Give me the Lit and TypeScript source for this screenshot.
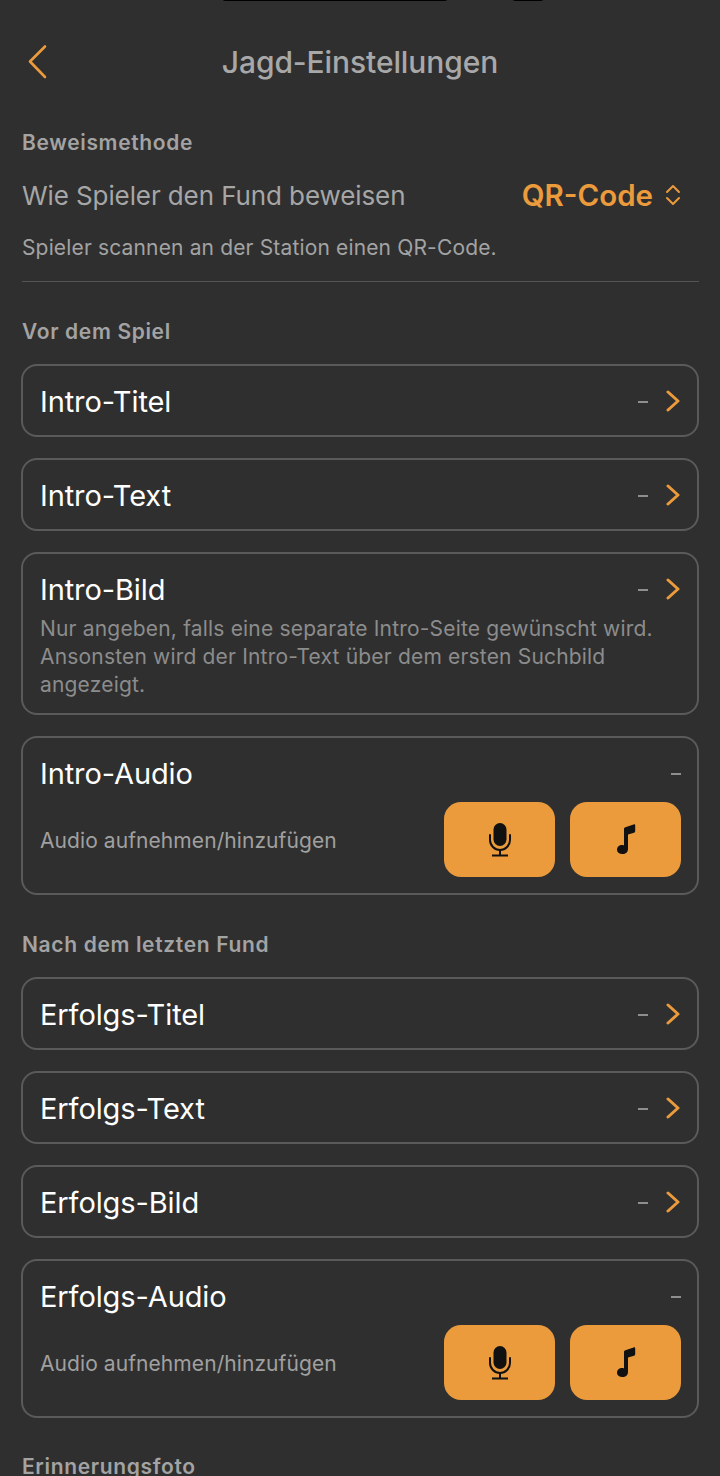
import { LitElement, html, css, nothing } from 'lit';
import { customElement } from 'lit/decorators.js';

const chevron = html`<svg class="chev" width="16" height="22" viewBox="0 0 16 22" fill="none"><path d="M3 2l10 9-10 9" stroke="currentColor" stroke-width="3" stroke-linecap="round" stroke-linejoin="round"/></svg>`;

const mic = html`<svg class="mic" width="24" height="34" viewBox="0 0 24 34" fill="none">
  <rect x="5.500" y="0" width="13" height="23" rx="6.500" fill="#111"/>
  <path d="M2 12v5a10 10 0 0 0 20 0v-5" stroke="#111" stroke-width="2" stroke-linecap="round"/>
  <path d="M12 27v5M4 32.500h16" stroke="#111" stroke-width="2"/>
</svg>`;

const note = html`<svg width="20" height="31" viewBox="0 0 20 31"><path fill="#111" d="M8 5c0-.9.5-1.500 1.400-1.800L17.600.4c.9-.3 1.600.2 1.600 1.100V7c0 .9-.4 1.400-1.200 1.700L12 10.500V25c0 3-2.300 5-5.500 5C3 30 1 28.200 1 25.700c0-2.700 2.300-4.700 5-4.700.8 0 1.500.1 2 .4z"/></svg>`;

@customElement('app-root')
export class AppRoot extends LitElement {
  static styles = css`
    :host {
      display: block;
      width: 720px;
      height: 1476px;
      overflow: hidden;
      background: #2f2f2f;
      position: relative;
      font-family: Inter, 'Noto Sans', sans-serif;
      color: #fff;
    }
    .notch {
      position: absolute;
      top: -6px;
      height: 7px;
      background: #000;
      border-radius: 4px;
    }
    .nav {
      display: flex;
      align-items: center;
      justify-content: center;
      position: relative;
      height: 36px;
      margin-top: 44px;
    }
    .back {
      position: absolute;
      left: 27px;
      top: 0;
      color: #eb9b3c;
    }
    .nav h1 {
      margin: 0;
      font-size: 30px;
      font-weight: 500;
      color: #a8a8a8;
      letter-spacing: -0.1px;
    }
    main {
      padding: 0 21px 0 22px;
    }
    .section {
      font-size: 21px;
      font-weight: 600;
      color: #a3a3a3;
      line-height: 24px;
      margin: 0;
      letter-spacing: 0.65px;
    }
    .first { margin-top: 51px; }
    .proof {
      display: flex;
      justify-content: space-between;
      align-items: center;
      margin-top: 24px;
      height: 32px;
      padding-right: 18px;
    }
    .proof .label { font-size: 26px; color: #a6a6a6; letter-spacing: -0.1px; }
    .picker {
      display: flex;
      align-items: center;
      gap: 12px;
      color: #eb9b3c;
      font-size: 29.500px;
      font-weight: 600;
    }
    .hint {
      font-size: 21px;
      line-height: 24px;
      color: #a3a3a3;
      margin-top: 25px;
      letter-spacing: 0.15px;
    }
    hr {
      border: 0;
      height: 1px;
      background: #545454;
      margin: 21px 0 0;
    }
    .vor { margin-top: 38px; }
    .list {
      display: flex;
      flex-direction: column;
      gap: 21px;
      margin-top: 20px;
      margin-left: -1px;
    }
    .card {
      border: 2px solid #5a5a5a;
      border-radius: 16px;
      padding: 17px 16px 16px 17px;
      box-sizing: border-box;
      min-height: 73px;
    }
    .row {
      display: flex;
      align-items: center;
      justify-content: space-between;
      height: 36px;
    }
    .title { font-size: 29px; font-weight: 400; color: #fff; letter-spacing: -0.1px; }
    .right { display: flex; align-items: center; gap: 17px; color: #8e8e8e; font-size: 22px; }
    .chev { color: #eb9b3c; display: block; }
    .dash { width: 10px; height: 2px; background: #8e8e8e; margin-top: 2px; }
    .sub {
      font-size: 21px;
      line-height: 28px;
      color: #8c8c8c;
      margin: 8px 0 -2px;
      letter-spacing: 0.18px;
    }
    .audio-row {
      display: flex;
      align-items: center;
      justify-content: space-between;
      margin-top: 11px;
    }
    .audio-row span { font-size: 21px; color: #a0a0a0; letter-spacing: 0.08px; padding-top: 2px; }
    .btns { display: flex; gap: 15px; }
    .btn {
      width: 111px;
      height: 75px;
      border: 0;
      border-radius: 17px;
      background: #eb9b3c;
      display: flex;
      align-items: center;
      justify-content: center;
      padding: 0;
    }
    .next { margin-top: 38px; }
    .last { margin-top: 37px; }
  `;

  private linkCard(title: string, sub?: string) {
    return html`<div class="card">
      <div class="row">
        <div class="title">${title}</div>
        <div class="right"><div class="dash"></div>${chevron}</div>
      </div>
      ${sub ? html`<div class="sub">${sub}</div>` : nothing}
    </div>`;
  }

  private audioCard(title: string) {
    return html`<div class="card">
      <div class="row">
        <div class="title">${title}</div>
        <div class="right"><div class="dash"></div></div>
      </div>
      <div class="audio-row">
        <span>Audio aufnehmen/hinzufügen</span>
        <div class="btns">
          <button class="btn">${mic}</button>
          <button class="btn">${note}</button>
        </div>
      </div>
    </div>`;
  }

  render() {
    return html`
      <div class="notch" style="left:222px;width:226px"></div>
      <div class="notch" style="left:512px;width:32px"></div>
      <div class="nav">
        <svg class="back" width="22" height="36" viewBox="0 0 22 36" fill="none"><path d="M18 2.500 3 17.500l15 15.500" stroke="currentColor" stroke-width="2.600" stroke-linecap="round" stroke-linejoin="round"/></svg>
        <h1>Jagd-Einstellungen</h1>
      </div>
      <main>
        <p class="section first">Beweismethode</p>
        <div class="proof">
          <div class="label">Wie Spieler den Fund beweisen</div>
          <div class="picker">QR-Code
            <svg width="16" height="24" viewBox="0 0 16 24" fill="none"><path d="M2 9l6-6 6 6M2 15l6 6 6-6" stroke="currentColor" stroke-width="2" stroke-linecap="round" stroke-linejoin="round"/></svg>
          </div>
        </div>
        <div class="hint">Spieler scannen an der Station einen QR-Code.</div>
        <hr />
        <p class="section vor">Vor dem Spiel</p>
        <div class="list">
          ${this.linkCard('Intro-Titel')}
          ${this.linkCard('Intro-Text')}
          ${this.linkCard('Intro-Bild', 'Nur angeben, falls eine separate Intro-Seite gewünscht wird. Ansonsten wird der Intro-Text über dem ersten Suchbild angezeigt.')}
          ${this.audioCard('Intro-Audio')}
        </div>
        <p class="section next">Nach dem letzten Fund</p>
        <div class="list">
          ${this.linkCard('Erfolgs-Titel')}
          ${this.linkCard('Erfolgs-Text')}
          ${this.linkCard('Erfolgs-Bild')}
          ${this.audioCard('Erfolgs-Audio')}
        </div>
        <p class="section last">Erinnerungsfoto</p>
      </main>
    `;
  }
}
